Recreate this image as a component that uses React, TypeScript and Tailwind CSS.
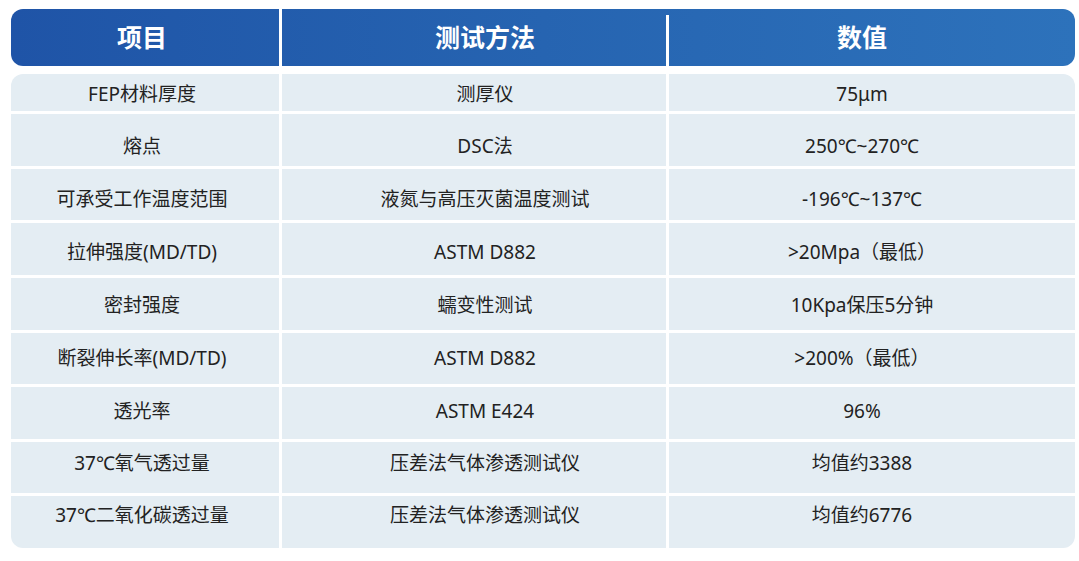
import React from "react";

const rows: { a: string; b: string; c: string; h: string; pt: string }[] = [
  { a: "FEP材料厚度", b: "测厚仪", c: "75μm", h: "h-[37px]", pt: "pt-[8px]" },
  { a: "熔点", b: "DSC法", c: "250℃~270℃", h: "h-[52px]", pt: "pt-[20px]" },
  { a: "可承受工作温度范围", b: "液氮与高压灭菌温度测试", c: "-196℃~137℃", h: "h-[51px]", pt: "pt-[18px]" },
  { a: "拉伸强度(MD/TD)", b: "ASTM D882", c: ">20Mpa（最低）", h: "h-[52px]", pt: "pt-[17px]" },
  { a: "密封强度", b: "蠕变性测试", c: "10Kpa保压5分钟", h: "h-[52px]", pt: "pt-[15px]" },
  { a: "断裂伸长率(MD/TD)", b: "ASTM D882", c: ">200%（最低）", h: "h-[51px]", pt: "pt-[13px]" },
  { a: "透光率", b: "ASTM E424", c: "96%", h: "h-[52px]", pt: "pt-[12px]" },
  { a: "37℃氧气透过量", b: "压差法气体渗透测试仪", c: "均值约3388", h: "h-[51px]", pt: "pt-[9px]" },
  { a: "37℃二氧化碳透过量", b: "压差法气体渗透测试仪", c: "均值约6776", h: "h-[52px]", pt: "pt-[7px]" },
];

export default function App() {
  return (
    <div
      className="w-[1079px] h-[561px] bg-white pt-[9px] pl-[11px]"
      style={{ fontFamily: '"Noto Sans", "Noto Sans CJK SC", sans-serif' }}
    >
      <div className="w-[1064px] h-[57px] rounded-[12px] bg-gradient-to-r from-[#1f54a7] via-[#2664b1] to-[#2d72bb] grid grid-cols-[268px_3px_384px_3px_406px] text-white font-bold text-[25px] overflow-hidden">
        <div className="flex items-center justify-center pr-[6px]">项目</div>
        <div className="bg-white" />
        <div className="flex items-center justify-center pl-[22px]">测试方法</div>
        <div className="bg-white mt-[6px]" />
        <div className="flex items-center justify-center pr-[20px]">数值</div>
      </div>
      <div className="mt-[8px] w-[1064px] rounded-[12px] overflow-hidden flex flex-col gap-[3px] text-[19px] leading-[24px] text-[#222222]">
        {rows.map((r, i) => (
          <div key={i} className={`grid grid-cols-[268px_384px_406px] gap-[3px] ${r.h}`}>
            <div className={`bg-[#e4edf3] flex justify-center items-start pr-[6px] ${r.pt}`}>{r.a}</div>
            <div className={`bg-[#e4edf3] flex justify-center items-start pl-[22px] ${r.pt}`}>{r.b}</div>
            <div className={`bg-[#e4edf3] flex justify-center items-start pr-[20px] ${r.pt}`}>{r.c}</div>
          </div>
        ))}
      </div>
    </div>
  );
}
